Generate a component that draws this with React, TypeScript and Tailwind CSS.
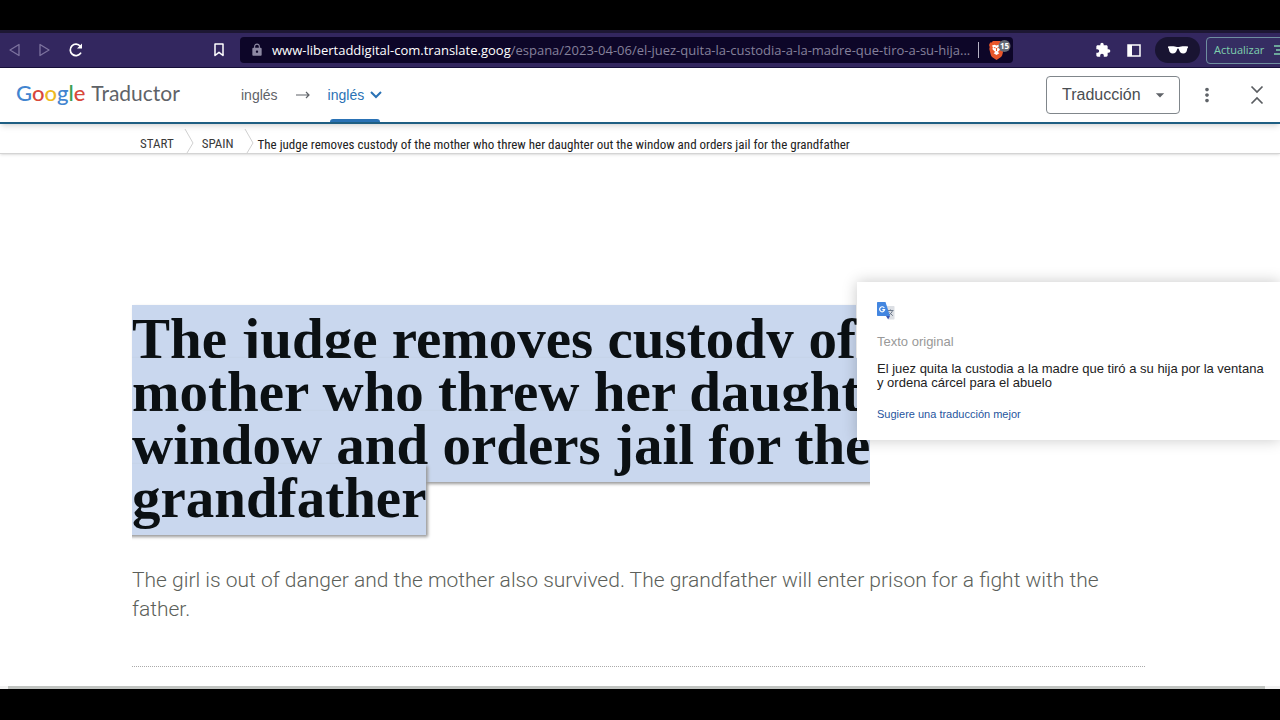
import React, { useState } from 'react';
import { MdArrowDropDown, MdExtension, MdLock, MdMoreVert } from 'react-icons/md';

const LOGO_LETTERS = [
  { char: 'G', color: 'text-[#4285d0]' },
  { char: 'o', color: 'text-[#d8483b]' },
  { char: 'o', color: 'text-[#eeb823]' },
  { char: 'g', color: 'text-[#4285d0]' },
  { char: 'l', color: 'text-[#3c9f52]' },
  { char: 'e', color: 'text-[#d8483b]' },
];

const BraveShield = () => (
  <svg width="22" height="20" viewBox="0 0 22 20" aria-hidden="true">
    <path d="M4 1h7l1.5 1.6 1.3-.2L15 5l-.6 2 .4 2-1.6 6.2c-.3 1-1 1.8-1.9 2.4L7.500 20l-3.800-2.400c-.9-.6-1.500-1.400-1.800-2.400L.3 9l.4-2L0 5l1.200-2.600 1.300.2z" fill="#e8562b" />
    <path d="M3 5.500l2.500-.8 2 .8 2-.8 2.500.8-.9 2 .5 1.500-2 2.300-1 .5 1.700 1.500L7.500 15l-2.800-1.700 1.700-1.500-1-.5-2-2.300.5-1.500z" fill="#fff" />
    <path d="M4.800 7.500l1.800.4M10.200 7.500l-1.800.4M7.500 8v3" stroke="#e8562b" strokeWidth="1" fill="none" />
    <circle cx="15.500" cy="6" r="6" fill="#646a75" />
    <text x="15.500" y="9" fontSize="8" fontWeight="700" textAnchor="middle" fill="#fff" fontFamily="Open Sans, sans-serif">15</text>
  </svg>
);

const Sunglasses = () => (
  <svg width="20" height="8" viewBox="0 0 20 8" aria-hidden="true">
    <path d="M0 .5C3 0 7 0 9 1h2c2-1 6-1 9-.5v1.300c-.7.3-.8 1-1 2.200-.4 2.200-1.500 3.500-3.700 3.500-2.500 0-3.600-1.300-4.300-3.700C10.700 2.900 10.500 2.500 10 2.500s-.7.400-1 1.300C8.300 6.200 7.200 7.500 4.700 7.500 2.500 7.500 1.400 6.200 1 4 .8 2.800.7 2.100 0 1.800z" fill="#fff" />
  </svg>
);

const TranslateLogo = () => (
  <svg width="18" height="18" viewBox="0 0 18 18" aria-hidden="true">
    <path d="M8 4h8.500c.6 0 1 .4 1 1v11.500c0 .6-.4 1-1 1H12z" fill="#dcdfe4" />
    <path d="M10.500 8.500h6M13.500 7.500v1M15.500 8.500c-.5 2-2 3.600-3.800 4.500M12.500 10.500l3.300 3.300" stroke="#6f7b8c" strokeWidth="1" fill="none" />
    <path d="M9 14h4l-1.800 3.500z" fill="#3a55b0" />
    <path d="M1 0h7.500L13 14H1c-.6 0-1-.4-1-1V1c0-.6.4-1 1-1z" fill="#4386e0" />
    <path d="M7.300 6A2.500 2.500 0 1 0 7.600 7.700H5.300" stroke="#fff" strokeWidth="1.200" fill="none" />
  </svg>
);

const BrowserBar = () => (
  <div className="flex h-[35px] items-center overflow-hidden border-b border-[#17103a] bg-[#33275f] text-white">
    <div className="flex w-[240px] shrink-0 items-center">
      <button aria-label="Atrás" className="ml-2 flex w-[30px]">
        <svg width="13" height="14" viewBox="0 0 13 14" fill="none" stroke="#7d739f" strokeWidth="1.300"><path d="M11 1.500v11L2 7z" strokeLinejoin="round" /></svg>
      </button>
      <button aria-label="Adelante" className="flex w-[30px]">
        <svg width="13" height="14" viewBox="0 0 13 14" fill="none" stroke="#7d739f" strokeWidth="1.300"><path d="M2 1.500v11L11 7z" strokeLinejoin="round" /></svg>
      </button>
      <button aria-label="Recargar" className="flex">
        <svg width="16" height="16" viewBox="0 0 16 16" fill="none" stroke="#fff" strokeWidth="1.700">
          <path d="M12.600 11.200A5.700 5.700 0 1 1 12.300 4.200" strokeLinecap="round" />
          <path d="M14 1.500v5H9z" fill="#fff" stroke="none" />
        </svg>
      </button>
      <button aria-label="Marcador" className="ml-auto mr-4 flex">
        <svg width="10" height="14" viewBox="0 0 10 14" fill="none" stroke="#fff" strokeWidth="1.500"><path d="M1 1h8v11.500L5 9.300 1 12.500z" strokeLinejoin="round" /></svg>
      </button>
    </div>
    <div className="flex h-[26px] min-w-0 flex-1 items-center rounded-sm bg-[#0d0628] pl-2.5">
      <MdLock size={14} className="shrink-0 text-[#8d89a3]" />
      <p className="ml-2 min-w-0 flex-1 whitespace-nowrap font-['Open_Sans',sans-serif] text-[13px] leading-5 text-[#85819b]">
        <span className="text-white">www-libertaddigital-com.translate.goog</span>
        /espana/2023-04-06/el-juez-quita-la-custodia-a-la-madre-que-tiro-a-su-hija...
      </p>
      <span className="mr-2.5 h-4 w-px shrink-0 bg-[#b5b2c4]" />
      <button aria-label="Brave Shields" className="mr-0.5 shrink-0"><BraveShield /></button>
    </div>
    <div className="flex w-[267px] shrink-0 items-center">
      <button aria-label="Extensiones" className="ml-[82px]"><MdExtension size={16} /></button>
      <button aria-label="Panel lateral" className="ml-4">
        <svg width="14" height="13" viewBox="0 0 14 13"><path d="M1 1h12v11H1z" fill="none" stroke="#fff" strokeWidth="1.500" /><path d="M1 1h4v11H1z" fill="#fff" /></svg>
      </button>
      <button aria-label="Perfil" className="ml-3.5 flex h-[26px] w-[45px] shrink-0 items-center justify-center rounded-full bg-[#191432]"><Sunglasses /></button>
      <button className="ml-1.5 flex h-[27px] shrink-0 items-center gap-2.5 rounded border border-[#6f8fa0] bg-[#352d62] px-[7px] font-['Open_Sans',sans-serif] text-[11px] text-[#7fd0ae]">
        Actualizar
        <svg width="14" height="10" viewBox="0 0 14 10" stroke="#7fd0ae" strokeWidth="1.300"><path d="M0 1h14M2 5h12M0 9h14" /></svg>
      </button>
    </div>
  </div>
);

const TranslateHeader = () => {
  const [view, setView] = useState('Traducción');

  return (
    <header className="relative z-10 flex h-14 items-stretch border-b-2 border-[#1f5f83] bg-white font-['Liberation_Sans',Arial,sans-serif] shadow-md">
      <a href="#" className="ml-4 flex w-[225px] items-baseline gap-1.5 self-center pb-1 font-[Lato,sans-serif] text-[22px] leading-7 text-[#5f6368]">
        <span className="font-medium">{LOGO_LETTERS.map((l, i) => <span key={i} className={l.color}>{l.char}</span>)}</span>
        <span className="text-[21px]">Traductor</span>
      </a>
      <button className="text-sm text-[#5f6368]">inglés</button>
      <svg className="ml-[18px] self-center" width="14" height="8" viewBox="0 0 14 8" fill="none" stroke="#5f6368" strokeWidth="1.200"><path d="M0 4h13M10 1l3 3-3 3" /></svg>
      <button className="relative ml-[18px] flex items-center gap-1.5 text-sm text-[#2a72b5]">
        inglés
        <svg width="12" height="8" viewBox="0 0 12 8" fill="none" stroke="#2a72b5" strokeWidth="2"><path d="M1 1l5 5 5-5" /></svg>
        <span className="absolute inset-x-0.5 bottom-0 h-[3px] rounded-t bg-[#2a72b5]" />
      </button>
      <label className="relative ml-auto flex items-center self-center">
        <span className="sr-only">Vista</span>
        <select
          value={view}
          onChange={(e) => setView(e.target.value)}
          className="h-[38px] w-[134px] appearance-none rounded border border-[#80868b] bg-white pl-[15px] text-base text-[#4a4d51]"
        >
          <option>Traducción</option>
          <option>Original</option>
        </select>
        <MdArrowDropDown size={20} className="pointer-events-none absolute right-2.5 text-[#5f6368]" />
      </label>
      <button aria-label="Más opciones" className="ml-4 text-[#5f6368]"><MdMoreVert size={22} /></button>
      <button aria-label="Contraer" className="ml-8 mr-4">
        <svg width="14" height="20" viewBox="0 0 14 20" fill="none" stroke="#5a5d61" strokeWidth="1.700"><path d="M1.500 1.500L7 7l5.500-5.500M1.500 18.500L7 13l5.500 5.500" /></svg>
      </button>
    </header>
  );
};

const CrumbArrow = () => (
  <svg width="10" height="24" viewBox="0 0 10 24" fill="none" stroke="#d0d0d0" aria-hidden="true"><path d="M1 0l8 14-6 10" /></svg>
);

const Breadcrumb = () => (
  <nav className="flex h-[30px] items-end border-b border-[#d4d4d4] pl-[140px] font-['Roboto_Condensed',Roboto,sans-serif] text-[13px] leading-[18px] text-[#3a3a3a] shadow-sm">
    <a href="#">START</a>
    <span className="ml-2.5 mr-2"><CrumbArrow /></span>
    <a href="#">SPAIN</a>
    <span className="ml-2.5 mr-1"><CrumbArrow /></span>
    <span className="leading-4 text-[#222]">The judge removes custody of the mother who threw her daughter out the window and orders jail for the grandfather</span>
  </nav>
);

const OriginalTextPopup = () => (
  <aside className="absolute right-0 top-[158px] w-[423px] bg-white pb-[18px] pl-5 pr-3 pt-5 font-['Liberation_Sans',Arial,sans-serif] shadow-[0_0_14px_rgba(0,0,0,0.22)]">
    <TranslateLogo />
    <h2 className="mt-3.5 text-[13px] leading-4 text-[#999]">Texto original</h2>
    <p className="mt-3 text-[13px] leading-[14px] text-[#222]">
      El juez quita la custodia a la madre que tiró a su hija por la ventana
      <br />
      y ordena cárcel para el abuelo
    </p>
    <a href="#" className="mt-4 block text-[11px] leading-4 text-[#1f559e]">Sugiere una traducción mejor</a>
  </aside>
);

export default function App() {
  return (
    <div className="flex min-h-screen flex-col bg-black">
      <div className="mt-[30px] h-[3px] bg-[#1d1733]" />
      <BrowserBar />
      <TranslateHeader />
      <main className="relative flex-1 overflow-hidden bg-white">
        <Breadcrumb />
        <article className="ml-[132px] mr-[135px] border-b border-dotted border-[#aaa] pb-[42px] pt-[158px]">
          <h1 className="whitespace-nowrap font-['Liberation_Serif',serif] text-[57px] font-bold leading-[53px] text-[#0b1013]">
            {/* each line's highlight covers the descenders of the line above */}
            <span className="bg-[#c9d7ee] pb-1.5 pt-0.5 shadow-[2px_2px_3px_#999]">
              The judge removes custody of
              <br />
              mother who threw her daughter
              <br />
              window and orders jail for the
              <br />
              grandfather
            </span>
          </h1>
          <p className="mt-[42px] font-[Roboto,sans-serif] text-[21px] font-light leading-[29px] text-[#5c5f5a]">
            The girl is out of danger and the mother also survived. The grandfather will enter prison for a fight with the father.
          </p>
        </article>
        <OriginalTextPopup />
      </main>
      <div className="h-[3px] bg-[#f1f1f1] pl-2 pr-[15px]">
        <div className="h-full bg-[#c1c4c1]" />
      </div>
      <div className="h-[31px]" />
    </div>
  );
}
